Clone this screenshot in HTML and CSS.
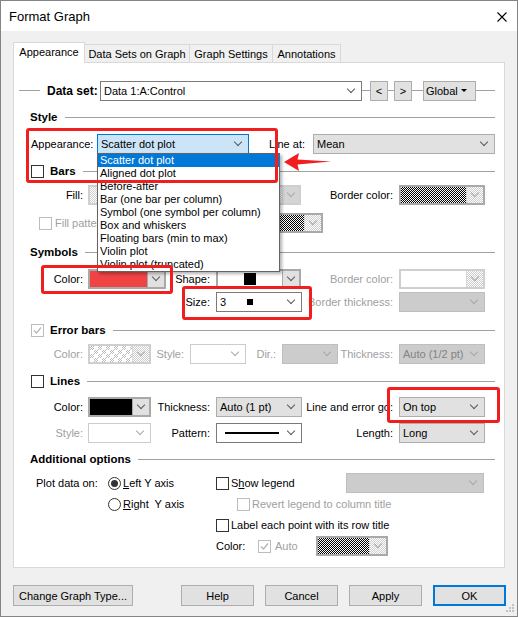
FILE: index.html
```html
<!DOCTYPE html>
<html lang="en">
<head>
    <meta charset="UTF-8">
    <title>Format Graph</title>
    <link rel="stylesheet" href="styles.css">
</head>
<body>
    <div class="window">
        <div class="titlebar">
            <span class="title">Format Graph</span>
            <svg width="10" height="10" viewBox="0 0 10 10"><path d="M0.5 0.5 L9.5 9.5 M9.5 0.5 L0.5 9.5" stroke="#000" stroke-width="1.1"/></svg>
        </div>

        <!-- tabs -->
        <div class="tabs">
            <div class="tab active t1">Appearance</div>
            <div class="tab t2">Data Sets on Graph</div>
            <div class="tab t3">Graph Settings</div>
            <div class="tab t4">Annotations</div>
        </div>

        <div class="panel">
            <div class="dataset">
                <span class="seg s21"></span>
                <b class="ds-label">Data set:</b>
                <div class="combo white ds-combo"><span>Data 1:A:Control</span></div>
                <span class="seg s8"></span>
                <div class="sbtn">&lt;</div>
                <span class="seg s6"></span>
                <div class="sbtn">&gt;</div>
                <span class="seg s11"></span>
                <div class="sbtn global">Global</div>
                <span class="seg s19"></span>
            </div>

            <!-- Style -->
            <div class="head mt9"><span>Style</span><span class="line"></span></div>
            <div class="row mt10">
                <span class="appear-lab">Appearance:</span>
                <div class="combo focus w152"><span>Scatter dot plot</span></div>
                <span class="lab w64">Line at:</span>
                <div class="combo w182"><span>Mean</span></div>
            </div>

            <!-- Bars -->
            <div class="head mt10"><span class="cb"></span><span>Bars</span><span class="line"></span></div>
            <div class="row mt7">
                <span class="lab w58">Fill:</span>
                <div class="swatch off w213"><span class="fill pale"></span><span class="btn"></span></div>
                <span class="lab w98">Border color:</span>
                <div class="swatch w86"><span class="fill dots"></span><span class="btn pale"></span></div>
            </div>
            <div class="row mt8">
                <div class="fillpat"><span class="cb off"></span><span class="dim">Fill pattern</span></div>
                <div class="swatch w93"><span class="fill dots"></span><span class="btn pale"></span></div>
            </div>

            <!-- Symbols -->
            <div class="head mt12"><span>Symbols</span><span class="line"></span></div>
            <div class="row mt10">
                <span class="lab w58">Color:</span>
                <div class="swatch w78"><span class="fill red"></span><span class="btn"></span></div>
                <span class="lab w50">Shape:</span>
                <div class="swatch w85"><span class="fill"><span class="shape"></span></span><span class="btn"></span></div>
                <span class="lab w98 dim">Border color:</span>
                <div class="swatch off w86"><span class="fill"></span><span class="btn pale"></span></div>
            </div>
            <div class="row mt3">
                <span class="lab w186">Size:</span>
                <div class="combo white w86"><span>3</span><span class="dot"></span></div>
                <span class="lab w97 dim">Border thickness:</span>
                <div class="combo off w86"></div>
            </div>

            <!-- Error bars -->
            <div class="head mt11">
                <span class="cb off"><svg width="9" height="9" viewBox="0 0 9 9"><polyline points="1,4.5 3.5,7 8,1.5" fill="none" stroke="#b4b4b4" stroke-width="1.2"/></svg></span>
                <span>Error bars</span><span class="line"></span>
            </div>
            <div class="row mt7">
                <span class="lab w58 dim">Color:</span>
                <div class="swatch off w63"><span class="fill blotch"></span><span class="btn pale"></span></div>
                <span class="lab w39 dim">Style:</span>
                <div class="combo blank w56"></div>
                <span class="lab w36 dim">Dir.:</span>
                <div class="combo off w56"></div>
                <span class="lab w61 dim">Thickness:</span>
                <div class="combo off w86"><span>Auto (1/2 pt)</span></div>
            </div>

            <!-- Lines -->
            <div class="head mt10"><span class="cb"></span><span>Lines</span><span class="line"></span></div>
            <div class="row mt9">
                <span class="lab w58">Color:</span>
                <div class="swatch w63"><span class="fill black"></span><span class="btn"></span></div>
                <span class="lab w65">Thickness:</span>
                <div class="combo w86"><span>Auto (1 pt)</span></div>
                <span class="lab w97">Line and error go:</span>
                <div class="combo w86"><span>On top</span></div>
            </div>
            <div class="row mt6">
                <span class="lab w58 dim">Style:</span>
                <div class="combo blank w63"></div>
                <span class="lab w65">Pattern:</span>
                <div class="combo white w86"><span class="pattern"></span></div>
                <span class="lab w97">Length:</span>
                <div class="combo w86"><span>Long</span></div>
            </div>

            <!-- Additional options -->
            <div class="head mt9"><span>Additional options</span><span class="line"></span></div>
            <div class="options mt7">
                <div class="opt-col left">
                    <div class="row"><span class="plot-lab">Plot data on:</span><span class="rb on"></span><span class="rtext"><u>L</u>eft Y axis</span></div>
                    <div class="row radio2"><span class="rb"></span><span class="rtext"><u>R</u>ight&nbsp; Y axis</span></div>
                </div>
                <div class="opt-col">
                    <div class="row"><span class="cb"></span><span class="ctext legend">S<u>h</u>ow legend</span><div class="combo off w138"></div></div>
                    <div class="row"><span class="cb off indent"></span><span class="ctext dim">Revert legend to column title</span></div>
                    <div class="row"><span class="cb"></span><span class="ctext">Label each point with its row title</span></div>
                    <div class="row">
                        <span class="color-lab">Color:</span>
                        <span class="cb off"><svg width="9" height="9" viewBox="0 0 9 9"><polyline points="1,4.5 3.5,7 8,1.5" fill="none" stroke="#b4b4b4" stroke-width="1.2"/></svg></span>
                        <span class="auto dim">Auto</span>
                        <div class="swatch w72"><span class="fill dots"></span><span class="btn pale"></span></div>
                    </div>
                </div>
            </div>
        </div>

        <div class="footer">
            <button class="btn-main wide">Change Graph Type...</button>
            <button class="btn-main">Help</button>
            <button class="btn-main">Cancel</button>
            <button class="btn-main">Apply</button>
            <button class="btn-main default">OK</button>
        </div>
    </div>

    <!-- open dropdown list -->
    <div class="droplist">
        <div class="item sel">Scatter dot plot</div>
        <div class="item">Aligned dot plot</div>
        <div class="item">Before-after</div>
        <div class="item">Bar (one bar per column)</div>
        <div class="item">Symbol (one symbol per column)</div>
        <div class="item">Box and whiskers</div>
        <div class="item">Floating bars (min to max)</div>
        <div class="item">Violin plot</div>
        <div class="item">Violin plot (truncated)</div>
    </div>

    <!-- red annotations -->
    <div class="mark m1"></div>
    <div class="mark m2"></div>
    <div class="mark m3"></div>
    <div class="mark m4"></div>
    <svg class="arrow" width="54" height="24" viewBox="0 0 54 24"><polygon points="4,12 19,3 17.5,9.5 51,11.5 17.5,14.5 19,21" fill="#f01e1e"/></svg>

    <svg class="grip" width="10" height="10" viewBox="0 0 10 10">
        <rect x="7" y="1" width="2" height="2" fill="#c2c2c2"/>
        <rect x="4" y="4" width="2" height="2" fill="#c2c2c2"/>
        <rect x="7" y="4" width="2" height="2" fill="#c2c2c2"/>
        <rect x="1" y="7" width="2" height="2" fill="#c2c2c2"/>
        <rect x="4" y="7" width="2" height="2" fill="#c2c2c2"/>
        <rect x="7" y="7" width="2" height="2" fill="#c2c2c2"/>
    </svg>
</body>
</html>
```

FILE: styles.css
```css
body {
    margin: 0;
    font-family: "Liberation Sans", Arial, sans-serif;
    font-size: 11px;
    color: #000;
    background-color: #fff;
}
.window {
    width: 518px;
    height: 617px;
    box-sizing: border-box;
    border: 1px solid #858585;
    background-color: #f0f0f0;
}
.titlebar {
    height: 30px;
    background-color: #fff;
    display: flex;
    align-items: center;
    justify-content: space-between;
    padding: 0 10px 0 8px;
}
.titlebar svg {
    margin-top: 1px;
}
.title {
    font-size: 13px;
}

/* tabs */
.tabs {
    display: flex;
    align-items: flex-end;
    margin: 11px 0 0 12px;
}
.tab {
    height: 18px;
    box-sizing: border-box;
    border: 1px solid #d9d9d9;
    border-bottom: none;
    display: flex;
    align-items: center;
    justify-content: center;
    background-color: #f0f0f0;
}
.tab + .tab {
    margin-left: -1px;
}
.tab.active {
    height: 21px;
    margin-bottom: -1px;
    padding-bottom: 2px;
    background-color: #fff;
    position: relative;
    z-index: 1;
}
.t1 { width: 72px; }
.t2 { width: 106px; }
.t3 { width: 84px; }
.t4 { width: 69px; }

.panel {
    margin: 0 12px;
    height: 506px;
    box-sizing: border-box;
    border: 1px solid #d9d9d9;
    background-color: #fff;
    padding: 17px 9px 0 16px;
}

/* data set row */
.dataset {
    display: flex;
    align-items: center;
    height: 21px;
    margin-left: -11px;
}
.seg {
    height: 1px;
    background-color: #a0a0a0;
    flex: none;
}
.s21 { width: 21px; }
.s8 { width: 8px; }
.s6 { width: 6px; }
.s11 { width: 11px; }
.s19 { width: 19px; }
.ds-label {
    width: 53px;
    margin-left: 7px;
    font-size: 12px;
    flex: none;
}
.ds-combo {
    width: 262px;
    height: 21px;
    padding-left: 5px;
}
.sbtn {
    width: 18px;
    height: 20px;
    box-sizing: border-box;
    border: 1px solid #adadad;
    background-color: #e1e1e1;
    display: flex;
    align-items: center;
    justify-content: center;
    flex: none;
}
.sbtn.global {
    width: 53px;
    justify-content: flex-start;
    padding-left: 2px;
}
.sbtn.global::after {
    content: "";
    margin: 0 8px 0 auto;
    border-left: 3px solid transparent;
    border-right: 3px solid transparent;
    border-top: 3px solid #000;
}

/* section headers */
.head {
    display: flex;
    align-items: center;
    height: 14px;
    font-weight: bold;
    font-size: 11.5px;
}
.head .line {
    flex: 1;
    height: 1px;
    background-color: #a0a0a0;
    margin-left: 7px;
}
.head .cb {
    margin: 0 6px 0 1px;
}

.mt3 { margin-top: 3px; }
.mt6 { margin-top: 6px; }
.mt7 { margin-top: 7px; }
.mt8 { margin-top: 8px; }
.mt9 { margin-top: 9px; }
.mt10 { margin-top: 10px; }
.mt11 { margin-top: 11px; }
.mt12 { margin-top: 12px; }

.row {
    display: flex;
    align-items: center;
    height: 20px;
}
.lab {
    flex: none;
    box-sizing: border-box;
    text-align: right;
    padding-right: 6px;
    white-space: nowrap;
}
.dim {
    color: #a0a0a0;
}
.appear-lab {
    width: 67px;
    padding-left: 1px;
    box-sizing: border-box;
    flex: none;
}
.w36 { width: 36px; }
.w39 { width: 39px; }
.w50 { width: 50px; }
.w56 { width: 56px; }
.w58 { width: 58px; padding-right: 5px; }
.w61 { width: 61px; }
.w63 { width: 63px; }
.w64 { width: 64px; padding-right: 8px; }
.w65 { width: 65px; }
.w72 { width: 72px; }
.w78 { width: 78px; }
.w85 { width: 85px; }
.w86 { width: 86px; }
.w93 { width: 93px; }
.w97 { width: 97px; }
.w98 { width: 98px; }
.w138 { width: 138px; }
.w152 { width: 152px; }
.w182 { width: 182px; }
.w186 { width: 186px; }
.w213 { width: 213px; }

/* combo boxes */
.combo {
    display: flex;
    align-items: center;
    height: 20px;
    box-sizing: border-box;
    border: 1px solid #adadad;
    background-color: #e1e1e1;
    padding-left: 3px;
    flex: none;
    white-space: nowrap;
}
.combo::after {
    content: "";
    margin: -4px 7px 0 auto;
    width: 5px;
    height: 5px;
    border-right: 1px solid #5a5a5a;
    border-bottom: 1px solid #5a5a5a;
    transform: rotate(45deg);
}
.combo.white {
    background-color: #fff;
    border-color: #7a7a7a;
}
.combo.focus {
    background-color: #cce4f7;
    border-color: #0078d7;
}
.combo.off {
    background-color: #cccccc;
    border-color: #bfbfbf;
    color: #838383;
}
.combo.blank {
    background-color: #fff;
    border-color: #cccccc;
}
.combo.off::after, .combo.blank::after {
    border-color: #a8a8a8;
}
.dot {
    width: 6px;
    height: 6px;
    background-color: #000;
    margin-left: 21px;
}
.pattern {
    width: 54px;
    height: 2px;
    background-color: #000;
    margin-left: 5px;
}

/* colour swatch pickers */
.swatch {
    display: flex;
    height: 20px;
    box-sizing: border-box;
    border: 2px solid #a9a9a9;
    background-color: #fff;
    flex: none;
}
.swatch .fill {
    flex: 1;
    display: flex;
    align-items: center;
    justify-content: center;
}
.swatch .btn {
    width: 16px;
    border-left: 1px solid #a9a9a9;
    background-color: #e1e1e1;
    display: flex;
    align-items: center;
    justify-content: center;
}
.swatch .btn::after {
    content: "";
    width: 5px;
    height: 5px;
    margin-top: -4px;
    border-right: 1px solid #5a5a5a;
    border-bottom: 1px solid #5a5a5a;
    transform: rotate(45deg);
}
.swatch.off {
    border-color: #cfcfcf;
}
.swatch.off .btn {
    border-left-color: #cfcfcf;
    background-color: #d4d4d4;
}
.swatch .btn.pale, .swatch.off .btn.pale {
    background: repeating-conic-gradient(#cdcdcd 0 25%, #fff 0 50%) 0 0 / 2px 2px;
    border-left-color: #d6d6d6;
}
.swatch.off .btn::after, .swatch .btn.pale::after {
    border-color: #a8a8a8;
}
.fill.red {
    background-color: #f04444;
}
.fill.black {
    background-color: #000;
}
.fill.dots {
    background: repeating-conic-gradient(#000 0 25%, #fff 0 50%) 0 0 / 2px 2px;
}
.fill.pale {
    background: repeating-conic-gradient(#d0d0d0 0 25%, #fff 0 50%) 0 0 / 2px 2px;
}
.fill.blotch {
    background:
        repeating-conic-gradient(#fff 0 25%, transparent 0 50%) 0 0 / 8px 8px,
        repeating-conic-gradient(#bdbdbd 0 25%, #fff 0 50%) 0 0 / 2px 2px;
}
.shape {
    width: 12px;
    height: 12px;
    background-color: #000;
}

/* check boxes and radios */
.cb {
    width: 13px;
    height: 13px;
    box-sizing: border-box;
    border: 1px solid #333;
    background-color: #fff;
    flex: none;
    display: flex;
    align-items: center;
    justify-content: center;
}
.cb.off {
    border-color: #bcbcbc;
}
.cb svg {
    display: block;
}
.rb {
    width: 13px;
    height: 13px;
    box-sizing: border-box;
    border: 1px solid #333;
    border-radius: 50%;
    background-color: #fff;
    flex: none;
    display: flex;
    align-items: center;
    justify-content: center;
}
.rb.on::after {
    content: "";
    width: 7px;
    height: 7px;
    border-radius: 50%;
    background-color: #333;
}
.fillpat {
    width: 200px;
    box-sizing: border-box;
    padding-left: 9px;
    display: flex;
    align-items: center;
}
.fillpat .dim {
    margin-left: 3px;
}

/* additional options */
.options {
    display: flex;
}
.opt-col {
    display: flex;
    flex-direction: column;
    gap: 1px;
}
.opt-col.left {
    width: 186px;
}
.plot-lab {
    width: 72px;
    padding-left: 6px;
    flex: none;
}
.radio2 {
    padding-left: 78px;
}
.rtext, .ctext {
    margin-left: 2px;
    white-space: nowrap;
}
.ctext.legend {
    width: 115px;
    flex: none;
}
.cb.indent {
    margin-left: 21px;
}
.color-lab {
    width: 42px;
    flex: none;
}
.auto {
    width: 41px;
    margin-left: 4px;
    flex: none;
}

/* footer buttons */
.footer {
    display: flex;
    gap: 11px;
    margin-top: 17px;
    padding: 0 11px 0 12px;
}
.btn-main {
    width: 73px;
    height: 21px;
    padding: 0;
    box-sizing: border-box;
    border: 1px solid #adadad;
    background-color: #e1e1e1;
    font-family: inherit;
    font-size: 11px;
    color: #000;
}
.btn-main.wide {
    width: 120px;
    margin-right: auto;
}
.btn-main.default {
    border: 2px solid #0078d7;
}

/* dropdown list of the appearance combo */
.droplist {
    position: absolute;
    left: 97px;
    top: 153px;
    width: 183px;
    box-sizing: border-box;
    border: 1px solid #646464;
    background-color: #fff;
    box-shadow: 2px 2px 3px rgba(0, 0, 0, 0.3);
    z-index: 5;
}
.droplist .item {
    height: 13px;
    line-height: 13px;
    padding-left: 2px;
    white-space: nowrap;
}
.droplist .item.sel {
    background-color: #0078d7;
    color: #fff;
}

/* red marks */
.mark {
    position: absolute;
    box-sizing: border-box;
    border: 3px solid #f01e1e;
    border-radius: 3px;
    z-index: 6;
}
.m1 { left: 26px; top: 128px; width: 252px; height: 55px; }
.m2 { left: 41px; top: 265px; width: 132px; height: 29px; }
.m3 { left: 182px; top: 286px; width: 130px; height: 34px; }
.m4 { left: 387px; top: 387px; width: 113px; height: 36px; }
.arrow {
    position: absolute;
    left: 280px;
    top: 150px;
    z-index: 6;
}
.grip {
    position: absolute;
    left: 505px;
    top: 603px;
}
```
